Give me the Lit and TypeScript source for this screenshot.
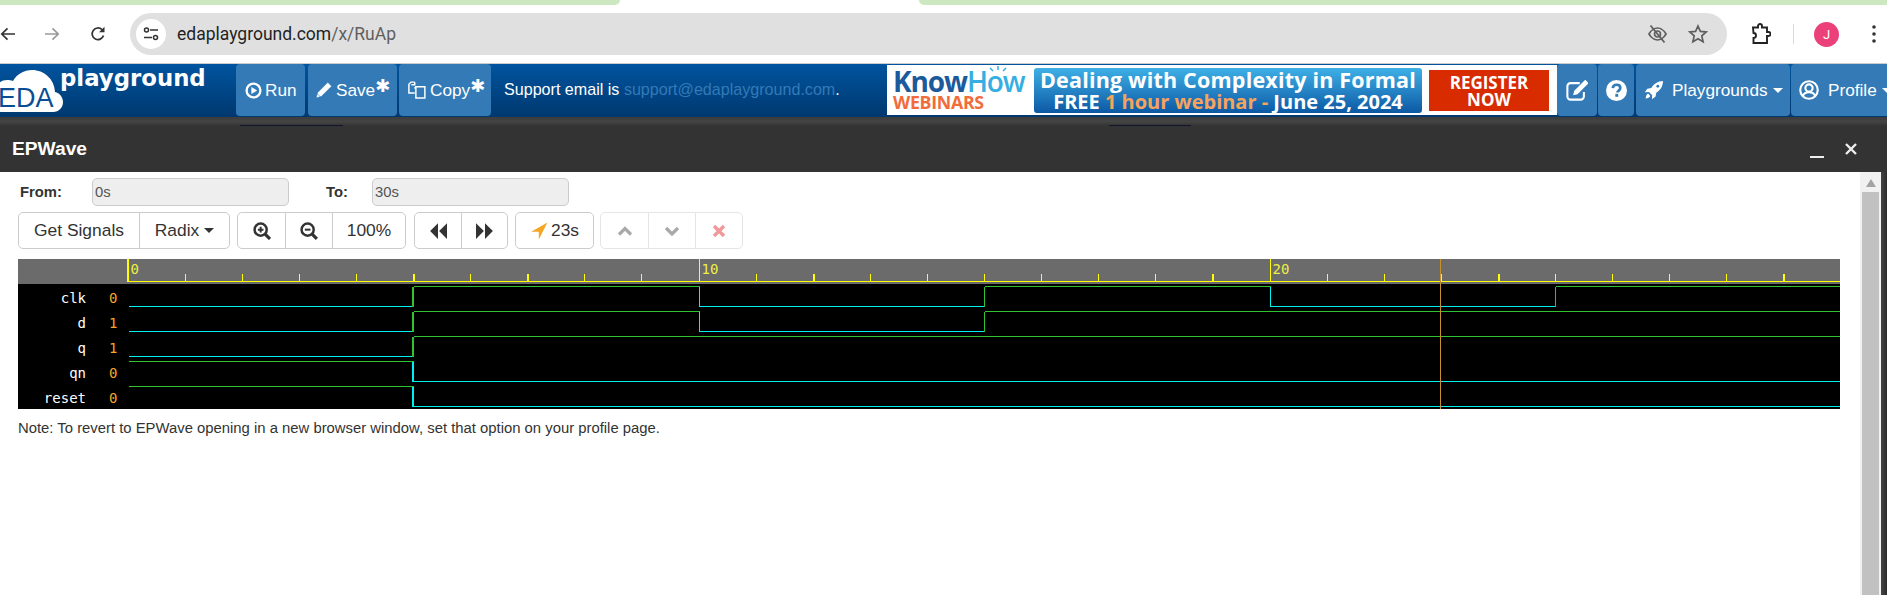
import { LitElement, html, css, svg } from 'lit';
import { customElement } from 'lit/decorators.js';

const GREEN = '#2fc42f';
const CYAN = '#00f0f0';
const AXIS_X = 110;
const WAVE_END = 1822;
const UNIT = 57.1;

// each signal: name, shown value, first level, edges in time units
const SIGNALS = [
  { name: 'clk', value: '0', start: 0, edges: [5, 10, 15, 20, 25] },
  { name: 'd', value: '1', start: 0, edges: [5, 10, 15] },
  { name: 'q', value: '1', start: 0, edges: [5] },
  { name: 'qn', value: '0', start: 1, edges: [5] },
  { name: 'reset', value: '0', start: 1, edges: [5] }
];

const THICK_TICKS = [5, 7, 12, 19, 24, 29];

function edgeX(t: number) {
  return Math.floor(AXIS_X + t * UNIT) + 0.5;
}

function waveLines(sig: (typeof SIGNALS)[number], row: number) {
  const high = 27.5 + row * 25;
  const low = 47.5 + row * 25;
  const lines = [];
  let level = sig.start;
  let x = AXIS_X + 1;
  for (const t of sig.edges) {
    const ex = edgeX(t);
    const y = level ? high : low;
    lines.push(svg`<line x1=${x} x2=${ex} y1=${y} y2=${y} stroke=${level ? GREEN : CYAN} />`);
    // first edge is drawn heavier, several events land on that time
    lines.push(svg`<line x1=${t === 5 ? ex - 0.5 : ex} x2=${t === 5 ? ex - 0.5 : ex} y1=${high} y2=${low} stroke=${level ? CYAN : GREEN} stroke-width=${t === 5 ? 2 : 1} />`);
    level = level ? 0 : 1;
    x = ex;
  }
  const y = level ? high : low;
  lines.push(svg`<line x1=${x} x2=${WAVE_END} y1=${y} y2=${y} stroke=${level ? GREEN : CYAN} />`);
  return lines;
}

function ruler() {
  const out = [];
  for (let i = 1; i < 30; i++) {
    if (i % 10 === 0) continue;
    const x = edgeX(i);
    out.push(svg`<line x1=${x} x2=${x} y1="15" y2="22" stroke="#ffff00" stroke-width=${THICK_TICKS.includes(i) ? 2 : 1} />`);
  }
  return out;
}

const ICONS = {
  play: svg`<circle cx="8" cy="8" r="6.5" fill="none" stroke="currentColor" stroke-width="2.2"/><path d="M6 4.6 11.4 8 6 11.4z" fill="currentColor"/>`,
  pencil: svg`<path d="M11.4 1.2l3.4 3.4-9.2 9.2-4.6 1.2 1.2-4.6zM1.9 11.2l2.9 2.9" fill="currentColor" stroke="#337ab7" stroke-width=".6"/>`,
  copy: svg`<path d="M6 1H2.6L.8 3v7.6H6M6 1v2.4H3M7 5.2h8v10H7zM7 5.2 5.8 6.6" fill="none" stroke="currentColor" stroke-width="1.3"/>`,
  edit: svg`<path d="M13 9.5v3.2A2.3 2.3 0 0 1 10.7 15H3.3A2.3 2.3 0 0 1 1 12.7V5.3A2.3 2.3 0 0 1 3.3 3H10" fill="none" stroke="currentColor" stroke-width="1.5"/><path d="M14 .6l2.4 2.4-8 8-3.2.8.8-3.2z" fill="currentColor"/>`,
  help: svg`<circle cx="8" cy="8" r="8" fill="currentColor"/><path d="M5.2 6.2C5.3 4.4 6.6 3.6 8.1 3.6c1.600 0 2.800 1 2.800 2.400 0 2.100-2.200 2-2.200 3.600" fill="none" stroke="#337ab7" stroke-width="2"/><rect x="7.100" y="10.600" width="2.200" height="2.200" fill="#337ab7"/>`,
  rocket: svg`<path d="M16 0c-4.600.2-8 2.400-10.400 6.200L2 6.800-.2 10l3.800-.2 2.800 2.800-.2 3.600 3.200-2.400.6-3.400C13.800 8.200 15.800 4.800 16 0z" fill="currentColor"/><circle cx="11.400" cy="4.600" r="1.300" fill="#337ab7"/><path d="M2.800 11.200C1.400 12 .8 13.600.6 15.600c2-.2 3.400-1 4.200-2.200z" fill="currentColor"/>`,
  user: svg`<circle cx="8" cy="8" r="7" fill="none" stroke="currentColor" stroke-width="1.700"/><circle cx="8" cy="6.400" r="2.900" fill="none" stroke="currentColor" stroke-width="1.700"/><path d="M3 12.800c.8-2 2.400-3 5-3s4.200 1 5 3" fill="none" stroke="currentColor" stroke-width="1.700"/>`,
  zoomIn: svg`<circle cx="6.800" cy="6.800" r="5.400" fill="none" stroke="currentColor" stroke-width="2.200"/><path d="M10.800 10.800 15 15M4.300 6.800h5M6.800 4.300v5" fill="none" stroke="currentColor" stroke-width="1.800"/><path d="M10.800 10.800 15 15" stroke="currentColor" stroke-width="2.800"/>`,
  zoomOut: svg`<circle cx="6.800" cy="6.800" r="5.400" fill="none" stroke="currentColor" stroke-width="2.200"/><path d="M4.300 6.800h5" fill="none" stroke="currentColor" stroke-width="1.800"/><path d="M10.800 10.800 15 15" stroke="currentColor" stroke-width="2.800"/>`,
  back: svg`<path d="M8 1 1 8l7 7zM16 1 9 8l7 7z" fill="currentColor"/>`,
  forward: svg`<path d="M0 1l7 7-7 7zM8 1l7 7-7 7z" fill="currentColor"/>`,
  locate: svg`<path d="M15.500.500 1 8.600h6.800v6.900z" fill="#f5a623"/>`,
  up: svg`<path d="M2 11.500 8 5.500l6 6" fill="none" stroke="currentColor" stroke-width="3.200"/>`,
  down: svg`<path d="M2 5 8 11l6-6" fill="none" stroke="currentColor" stroke-width="3.200"/>`,
  times: svg`<path d="M3 3l10 10M13 3 3 13" fill="none" stroke="#e5343a" stroke-width="3.400"/>`
};

function icon(name: keyof typeof ICONS, size = 16) {
  return html`<svg class="ico" width=${size} height=${size} viewBox="0 0 16 16">${ICONS[name]}</svg>`;
}

@customElement('browser-bar')
export class BrowserBar extends LitElement {
  static styles = css`
    :host {
      display: block;
      height: 64px;
      background: #fff;
      border-bottom: 0;
      font-family: Roboto, 'Liberation Sans', sans-serif;
    }
    .tabs {
      display: flex;
      justify-content: space-between;
      height: 13px;
    }
    .tab {
      height: 5px;
      background: #cbe8c0;
    }
    .tab.left {
      width: 620px;
      border-bottom-right-radius: 8px;
    }
    .tab.right {
      width: 968px;
      border-bottom-left-radius: 8px;
    }
    .tools {
      display: flex;
      align-items: center;
      height: 42px;
    }
    .nav {
      display: flex;
      align-items: center;
      width: 130px;
      flex: none;
    }
    .nav svg {
      flex: none;
    }
    .fwd {
      margin-left: 30px;
    }
    .reload {
      margin-left: 30px;
    }
    .omni {
      flex: none;
      width: 1597px;
      height: 42px;
      border-radius: 21px;
      background: #e0e0e0;
      display: flex;
      align-items: center;
      padding: 0 19px 0 6px;
      box-sizing: border-box;
    }
    .chip {
      width: 30px;
      height: 30px;
      border-radius: 50%;
      background: #fff;
      display: flex;
      align-items: center;
      justify-content: center;
      flex: none;
    }
    .url {
      margin-left: 11px;
      font-size: 17.500px;
      color: #1f1f1f;
      flex: 1;
    }
    .url span {
      color: #5f5f5f;
    }
    .star {
      margin-left: 20px;
    }
    .puzzle {
      margin-left: 24px;
    }
    .sep {
      width: 1px;
      height: 20px;
      background: #c8e6c0;
      margin-left: 22px;
    }
    .avatar {
      width: 25px;
      height: 25px;
      border-radius: 50%;
      background: #ec407a;
      color: #fff;
      font-size: 13px;
      display: flex;
      align-items: center;
      justify-content: center;
      margin-left: 20px;
      flex: none;
    }
    .dots {
      margin-left: 33px;
    }
  `;

  render() {
    return html`
      <div class="tabs"><div class="tab left"></div><div class="tab right"></div></div>
      <div class="tools">
        <div class="nav">
          <svg width="15" height="14" viewBox="0 0 15 14"><path d="M15 7H2M7.500 1.300 1.800 7l5.700 5.700" fill="none" stroke="#333" stroke-width="1.700"/></svg>
          <svg class="fwd" width="15" height="14" viewBox="0 0 15 14"><path d="M0 7h13M7.500 1.300 13.200 7l-5.700 5.700" fill="none" stroke="#9a9a9a" stroke-width="1.700"/></svg>
          <svg class="reload" width="16" height="16" viewBox="0 0 16 16"><path d="M13.500 9.500A5.800 5.800 0 1 1 12 3.600" fill="none" stroke="#333" stroke-width="1.700"/><path d="M14.500.800v5.400H9z" fill="#333"/></svg>
        </div>
        <div class="omni">
          <div class="chip">
            <svg width="16" height="14" viewBox="0 0 16 14"><circle cx="3.500" cy="3" r="2" fill="none" stroke="#333" stroke-width="1.500"/><path d="M7 3h8M1 10.500h8" stroke="#333" stroke-width="1.500"/><circle cx="12.500" cy="10.500" r="2" fill="none" stroke="#333" stroke-width="1.500"/></svg>
          </div>
          <div class="url">edaplayground.com<span>/x/RuAp</span></div>
          <svg width="21" height="20" viewBox="0 0 21 20"><path d="M2 10s3.200-6 8.500-6 8.500 6 8.500 6-3.200 6-8.500 6S2 10 2 10z" fill="none" stroke="#5f5f5f" stroke-width="1.700"/><circle cx="10.500" cy="10" r="3" fill="none" stroke="#5f5f5f" stroke-width="1.700"/><path d="M3.500 1.500l14 17" stroke="#5f5f5f" stroke-width="1.800"/></svg>
          <svg class="star" width="20" height="20" viewBox="0 0 20 20"><path d="M10 2l2.400 5.400 5.800.6-4.400 3.900 1.300 5.800L10 14.700l-5.100 3 1.300-5.800L1.800 8l5.800-.6z" fill="none" stroke="#5f5f5f" stroke-width="1.700"/></svg>
        </div>
        <svg class="puzzle" width="20" height="22" viewBox="0 0 20 22"><path d="M2 4.500h5V3a2 2 0 0 1 4 0v1.500h5V9h1.500a2 2 0 0 1 0 4H16v7H2.500v-5a2.500 2.500 0 0 0 0-5z" fill="none" stroke="#222" stroke-width="1.900"/></svg>
        <div class="sep"></div>
        <div class="avatar">J</div>
        <svg class="dots" width="4" height="18" viewBox="0 0 4 18"><circle cx="2" cy="2" r="1.800" fill="#333"/><circle cx="2" cy="9" r="1.800" fill="#333"/><circle cx="2" cy="16" r="1.800" fill="#333"/></svg>
      </div>
    `;
  }
}

@customElement('ad-banner')
export class AdBanner extends LitElement {
  static styles = css`
    :host {
      display: flex;
      flex: none;
      width: 670px;
      height: 50px;
      margin: 1px 0 0 0;
      background: #fff;
      align-items: center;
      font-family: 'Open Sans', 'Liberation Sans', sans-serif;
      font-weight: 700;
    }
    .brand {
      width: 147px;
      box-sizing: border-box;
      padding-left: 6px;
      flex: none;
      position: relative;
    }
    .know {
      font-size: 28px;
      line-height: 25px;
      letter-spacing: -1.100px;
      color: #1c5a9c;
      white-space: nowrap;
    }
    .know span {
      color: #37aee2;
      font-weight: 600;
    }
    .web {
      font-size: 17.800px;
      line-height: 17px;
      color: #f26b3a;
      letter-spacing: -0.300px;
    }
    .rays {
      position: absolute;
      left: 100px;
      top: -3px;
    }
    .box {
      width: 388px;
      height: 45px;
      flex: none;
      box-sizing: border-box;
      border-radius: 3px;
      background: linear-gradient(#3fb0e6, #0c58a4);
      color: #fff;
      text-align: center;
      white-space: nowrap;
    }
    .l1 {
      font-size: 21.500px;
      line-height: 24px;
      letter-spacing: 0.200px;
    }
    .l2 {
      font-size: 20px;
      line-height: 20px;
    }
    .l2 span {
      color: #f7a35c;
    }
    .reg {
      width: 120px;
      height: 41px;
      margin-left: 7px;
      flex: none;
      background: #d92b00;
      color: #fff;
      font-size: 17px;
      line-height: 17px;
      text-align: center;
      padding-top: 4px;
      box-sizing: border-box;
    }
  `;

  render() {
    return html`
      <div class="brand">
        <div class="know">Know<span>How</span></div>
        <svg class="rays" width="22" height="8" viewBox="0 0 22 8"><path d="M11 0v4M3 2l3 3M19 2l-3 3" stroke="#37aee2" stroke-width="1.500"/></svg>
        <div class="web">WEBINARS</div>
      </div>
      <div class="box">
        <div class="l1">Dealing with Complexity in Formal</div>
        <div class="l2">FREE <span>1 hour webinar -</span> June 25, 2024</div>
      </div>
      <div class="reg">REGISTER<br />NOW</div>
    `;
  }
}

@customElement('eda-navbar')
export class EdaNavbar extends LitElement {
  static styles = css`
    :host {
      display: flex;
      height: 53px;
      background: linear-gradient(#00549f, #00386f);
      border-top: 1px solid #ccc;
      margin-top: -1px;
      font-family: 'Liberation Sans', Arial, sans-serif;
      color: #fff;
      overflow: hidden;
    }
    .logo {
      width: 236px;
      flex: none;
    }
    .btn {
      display: flex;
      align-items: center;
      flex: none;
      height: 52px;
      box-sizing: border-box;
      background: #337ab7;
      border-radius: 4px;
      font-size: 17.200px;
      white-space: nowrap;
    }
    .btn .ico {
      margin-right: 4px;
    }
    .run {
      width: 69px;
      padding-left: 9px;
    }
    .run .ico {
      margin-right: 3px;
    }
    .save {
      width: 89px;
      margin-left: 3px;
      padding-left: 7px;
    }
    .save .ico {
      margin-right: 3px;
    }
    .copy {
      width: 92px;
      margin-left: 2px;
      padding-left: 9px;
    }
    .star {
      font-size: 18px;
      font-weight: 700;
      line-height: 20px;
      align-self: flex-start;
      margin-top: 12px;
      font-family: 'DejaVu Sans', sans-serif;
    }
    .support {
      width: 396px;
      flex: none;
      box-sizing: border-box;
      padding-left: 13px;
      font-size: 16.100px;
      line-height: 50px;
      white-space: nowrap;
    }
    .support a {
      color: #337ab7;
      text-decoration: none;
    }
    .edit {
      width: 40px;
      justify-content: center;
    }
    .edit .ico,
    .help .ico {
      margin: 0;
    }
    .help {
      width: 36px;
      margin-left: 1px;
      justify-content: center;
    }
    .play {
      width: 154px;
      margin-left: 2px;
      padding-left: 9px;
    }
    .profile {
      width: 110px;
      margin-left: 1px;
      padding-left: 8px;
    }
    .play .ico,
    .profile .ico {
      margin-right: 9px;
    }
    .caret {
      width: 0;
      height: 0;
      margin-left: 5px;
      border-top: 5px solid #fff;
      border-left: 5px solid transparent;
      border-right: 5px solid transparent;
    }
  `;

  render() {
    return html`
      <div class="logo">
        <svg width="236" height="53" viewBox="0 0 236 53">
          <path d="M-4 48h57c6 0 10-4.500 10-10 0-5-3.500-9-8-10-.5-13-11-22-23-22-8 0-15 4-19 11-2-1-4-1-6-1-6 0-11 4-11 10z" fill="#fff"/>
          <text x="-2" y="43" font-family="'Liberation Sans', sans-serif" font-size="27" fill="#0b4d94">EDA</text>
          <text x="60" y="22" font-family="'DejaVu Sans', sans-serif" font-weight="700" font-size="22.800" fill="#fff">playground</text>
        </svg>
      </div>
      <div class="btn run">${icon('play', 17)}Run</div>
      <div class="btn save">${icon('pencil', 18)}Save<span class="star">✱</span></div>
      <div class="btn copy">${icon('copy', 18)}Copy<span class="star">✱</span></div>
      <div class="support">Support email is <a>support@edaplayground.com</a>.</div>
      <ad-banner></ad-banner>
      <div class="btn edit">${icon('edit', 22)}</div>
      <div class="btn help">${icon('help', 21)}</div>
      <div class="btn play">${icon('rocket', 18)}Playgrounds<span class="caret"></span></div>
      <div class="btn profile">${icon('user', 20)}Profile<span class="caret"></span></div>
    `;
  }
}

@customElement('wave-view')
export class WaveView extends LitElement {
  static styles = css`
    :host {
      display: block;
      width: 1822px;
      height: 150px;
      margin-left: 18px;
    }
    svg {
      display: block;
    }
    .name,
    .val,
    .num {
      font-family: 'DejaVu Sans Mono', monospace;
      font-size: 14px;
    }
    .name {
      fill: #fff;
      text-anchor: end;
    }
    .val {
      fill: #f5a623;
    }
    .num {
      fill: #eeee44;
    }
    line {
      shape-rendering: crispEdges;
    }
  `;

  render() {
    return html`
      <svg width="1822" height="150" viewBox="0 0 1822 150">
        <rect width="1822" height="25" fill="#6b6b6b" />
        <rect y="25" width="1822" height="125" fill="#000" />
        <line x1=${AXIS_X} x2=${WAVE_END} y1="22.500" y2="22.500" stroke="#ffff00" />
        <line x1="110" x2="110" y1="0" y2="23" stroke="#ffff00" stroke-width="2" />
        ${[10, 20].map((t) => svg`<line x1=${edgeX(t)} x2=${edgeX(t)} y1="0" y2="22" stroke="#ffff00" />`)}
        ${ruler()}
        ${[0, 10, 20].map((t) => svg`<text class="num" x=${edgeX(t) + 2} y="15">${t}</text>`)}
        ${SIGNALS.map(
          (s, i) => svg`
            <text class="name" x="68" y=${44 + i * 25}>${s.name}</text>
            <text class="val" x="91" y=${44 + i * 25}>${s.value}</text>
            ${waveLines(s, i)}
          `
        )}
        <line x1="1422.500" x2="1422.500" y1="0" y2="150" stroke="#c8902a" />
      </svg>
    `;
  }
}

@customElement('app-root')
export class AppRoot extends LitElement {
  static styles = css`
    :host {
      display: block;
      width: 1887px;
      height: 595px;
      overflow: hidden;
      background: #fff;
      font-family: 'Liberation Sans', Arial, sans-serif;
      color: #333;
    }
    .strip {
      height: 9px;
      background:
        linear-gradient(#10152e, #10152e) 240px 8px / 103px 1px no-repeat,
        linear-gradient(#10152e, #10152e) 1109px 8px / 82px 1px no-repeat,
        linear-gradient(#3c3c3c, #444 50%, #333);
    }
    .title {
      display: flex;
      align-items: center;
      height: 46px;
      background: #333;
      color: #fff;
      padding-left: 12px;
      font-size: 19.200px;
      font-weight: 700;
    }
    .title .name {
      flex: 1;
    }
    .min {
      width: 14px;
      height: 2px;
      background: #eee;
      margin-top: 15px;
      margin-right: 21px;
    }
    .close {
      margin-right: 30px;
      display: block;
    }
    .body {
      display: flex;
      height: 423px;
    }
    .main {
      width: 1860px;
      flex: none;
    }
    .range {
      display: flex;
      align-items: center;
      height: 28px;
      margin-top: 6px;
      padding-left: 20px;
      font-size: 14.800px;
      font-weight: 700;
    }
    .range label {
      flex: none;
    }
    .from {
      width: 72px;
    }
    .to {
      width: 46px;
      margin-left: 37px;
    }
    .field {
      width: 197px;
      height: 28px;
      box-sizing: border-box;
      flex: none;
      background: #eee;
      border: 1px solid #ccc;
      border-radius: 5px;
      font-size: 14.800px;
      font-weight: 400;
      color: #555;
      line-height: 26px;
      padding-left: 2px;
    }
    .bar {
      display: flex;
      height: 37px;
      margin: 6px 0 10px 18px;
      gap: 7px;
    }
    .group {
      display: flex;
      border: 1px solid #ccc;
      border-radius: 5px;
      box-sizing: border-box;
      background: #fff;
    }
    .group.nudge {
      margin-left: 1px;
    }
    .group.off {
      opacity: 0.5;
      margin-left: -1px;
    }
    .cell {
      display: flex;
      align-items: center;
      justify-content: center;
      box-sizing: border-box;
      font-size: 17.400px;
      color: #333;
      border-left: 1px solid #ccc;
      white-space: nowrap;
    }
    .cell:first-child {
      border-left: 0;
    }
    .w-signals {
      width: 120px;
    }
    .w-radix {
      width: 90px;
    }
    .w-icon {
      width: 47px;
    }
    .w-step {
      width: 46px;
    }
    .w-zoom {
      width: 73px;
    }
    .w-cursor {
      width: 77px;
      gap: 3px;
    }
    .w-off {
      width: 47px;
      color: #555;
    }
    .caret {
      width: 0;
      height: 0;
      margin-left: 5px;
      border-top: 5px solid #333;
      border-left: 5px solid transparent;
      border-right: 5px solid transparent;
    }
    .note {
      margin: 9px 0 0 18px;
      font-size: 14.850px;
      line-height: 20px;
    }
    .scroll {
      width: 21px;
      flex: none;
      background: #f1f1f1;
      display: flex;
      flex-direction: column;
      align-items: center;
    }
    .arrow {
      width: 0;
      height: 0;
      margin: 7px 0 5px;
      border-bottom: 8px solid #a3a3a3;
      border-left: 5px solid transparent;
      border-right: 5px solid transparent;
    }
    .thumb {
      width: 17px;
      flex: 1;
      background: #c1c1c1;
    }
    .edge {
      flex: 1;
      background: linear-gradient(90deg, #444, #2c2c2c);
    }
  `;

  render() {
    return html`
      <browser-bar></browser-bar>
      <eda-navbar></eda-navbar>
      <div class="strip"></div>
      <div class="title">
        <span class="name">EPWave</span>
        <span class="min"></span>
        <svg class="close" width="12" height="12" viewBox="0 0 12 12"><path d="M1 1l10 10M11 1 1 11" stroke="#eee" stroke-width="2.400"/></svg>
      </div>
      <div class="body">
        <div class="main">
          <div class="range">
            <label class="from">From:</label>
            <div class="field">0s</div>
            <label class="to">To:</label>
            <div class="field">30s</div>
          </div>
          <div class="bar">
            <div class="group">
              <div class="cell w-signals">Get Signals</div>
              <div class="cell w-radix">Radix<span class="caret"></span></div>
            </div>
            <div class="group">
              <div class="cell w-icon">${icon('zoomIn', 18)}</div>
              <div class="cell w-icon">${icon('zoomOut', 18)}</div>
              <div class="cell w-zoom">100%</div>
            </div>
            <div class="group nudge">
              <div class="cell w-step">${icon('back', 18)}</div>
              <div class="cell w-step">${icon('forward', 18)}</div>
            </div>
            <div class="group">
              <div class="cell w-cursor">${icon('locate', 18)}23s</div>
            </div>
            <div class="group off">
              <div class="cell w-off">${icon('up')}</div>
              <div class="cell w-off">${icon('down')}</div>
              <div class="cell w-off">${icon('times')}</div>
            </div>
          </div>
          <wave-view></wave-view>
          <div class="note">Note: To revert to EPWave opening in a new browser window, set that option on your profile page.</div>
        </div>
        <div class="scroll">
          <div class="arrow"></div>
          <div class="thumb"></div>
        </div>
        <div class="edge"></div>
      </div>
    `;
  }
}
